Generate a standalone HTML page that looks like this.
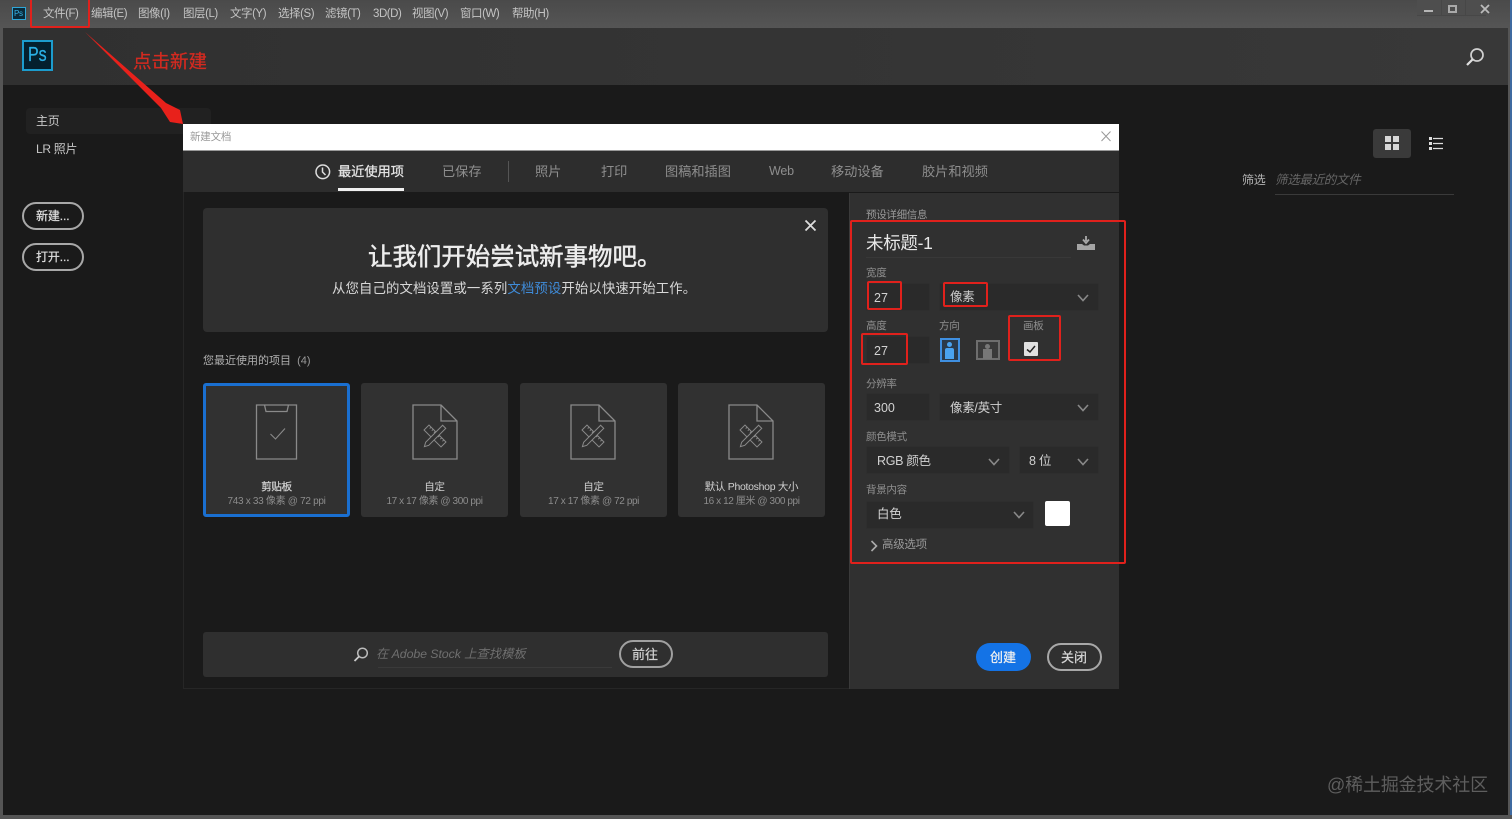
<!DOCTYPE html>
<html lang="zh-CN">
<head>
<meta charset="utf-8">
<title>Photoshop</title>
<style>
html,body{margin:0;padding:0;width:1512px;height:819px;overflow:hidden;background:#1a1a1a}
body{position:relative;font-family:"Liberation Sans","Noto Sans CJK SC",sans-serif;color:#ccc}
div,span.t{position:absolute;box-sizing:border-box}
.t{white-space:nowrap;line-height:1;letter-spacing:-.3px}
.m{font-size:11.5px;top:9px;color:#c4c4c4;letter-spacing:-.45px}
.tab{font-size:13.2px;top:165px;color:#8e8e8e;letter-spacing:0}
.lab{font-size:10.5px;color:#8f8f8f}
.val{font-size:12.5px;color:#d2d2d2}
.inp{background:#2a2a2a;border:1px solid #2e2e2e;border-radius:2px;height:28px}
.red{border:2px solid #e0211c;border-radius:2px}
.card{background:#313131;border-radius:3px;top:383px;width:147px;height:134px}
.ct{font-size:10.5px;top:482px;color:#d0d0d0;text-align:center;width:147px}
.cs{font-size:10px;top:497px;color:#8c8c8c;text-align:center;width:147px}
.b{-webkit-text-stroke:.25px currentColor}
svg{position:absolute;overflow:visible}
</style>
</head>
<body>
<div style="left:0;top:0;width:1512px;height:819px;filter:blur(.35px)">
<!-- title bar -->
<div style="left:0;top:0;width:1512px;height:28px;background:linear-gradient(#4a4a4a,#555)"></div>
<div style="left:0;top:28px;width:3px;height:791px;background:#555"></div>
<div style="left:1508px;top:28px;width:4px;height:791px;background:#555"></div>
<div style="left:1510px;top:0;width:2px;height:819px;background:#3f6aa0"></div>
<div style="left:0;top:815px;width:1512px;height:4px;background:#555"></div>
<div style="left:12px;top:7px;width:14px;height:13px;background:#0a2a3a;border:1px solid #2fa6d8"></div>
<span class="t" style="left:14px;top:10px;font-size:8px;color:#39b2e6">Ps</span>
<span class="t m" style="left:43px">文件(F)</span>
<span class="t m" style="left:91px">编辑(E)</span>
<span class="t m" style="left:138px">图像(I)</span>
<span class="t m" style="left:183px">图层(L)</span>
<span class="t m" style="left:230px">文字(Y)</span>
<span class="t m" style="left:278px">选择(S)</span>
<span class="t m" style="left:325px">滤镜(T)</span>
<span class="t m" style="left:373px">3D(D)</span>
<span class="t m" style="left:412px">视图(V)</span>
<span class="t m" style="left:460px">窗口(W)</span>
<span class="t m" style="left:512px">帮助(H)</span>
<div style="left:1417px;top:0;width:69px;height:16px;background:#4e4e4e;border-bottom:1px solid #474747"></div>
<div style="left:1441px;top:0;width:1px;height:16px;background:#474747"></div>
<div style="left:1465px;top:0;width:1px;height:16px;background:#474747"></div>
<div style="left:1424px;top:10px;width:9px;height:2px;background:#b5b5b5"></div>
<div style="left:1448px;top:5px;width:9px;height:8px;border:2px solid #aaa"></div>
<svg style="left:1480px;top:4px" width="10" height="10"><path d="M1 1L9 9M9 1L1 9" stroke="#bbb" stroke-width="1.8"/></svg>
<!-- header -->
<div style="left:3px;top:28px;width:1505px;height:57px;background:linear-gradient(90deg,#303030,#383838)"></div>
<div style="left:22px;top:40px;width:31px;height:31px;background:#04202e;border:2px solid #1c9ccd"></div>
<span class="t b" style="left:28px;top:45px;font-size:20px;color:#2bb0e6;letter-spacing:0;transform:scaleX(.8);transform-origin:left top">Ps</span>
<span class="t b" style="left:133px;top:53px;font-size:18.5px;color:#d42a20;letter-spacing:0">点击新建</span>
<svg style="left:1465px;top:47px" width="22" height="20" fill="none"><circle cx="12" cy="8" r="6" stroke="#d0d0d0" stroke-width="1.7"/><path d="M7.500 12.500L2 18" stroke="#e0e0e0" stroke-width="2.200"/></svg>
<!-- sidebar -->
<div style="left:26px;top:108px;width:185px;height:26px;background:#212121;border-radius:4px"></div>
<span class="t" style="left:36px;top:115px;font-size:12px;color:#c8c8c8">主页</span>
<span class="t" style="left:36px;top:143px;font-size:12px;color:#c8c8c8">LR 照片</span>
<div style="left:22px;top:202px;width:62px;height:28px;border:2px solid #a8a8a8;border-radius:14px"></div>
<span class="t b" style="left:36px;top:210px;font-size:12px;color:#ddd;letter-spacing:-.1px">新建...</span>
<div style="left:22px;top:243px;width:62px;height:28px;border:2px solid #a8a8a8;border-radius:14px"></div>
<span class="t b" style="left:36px;top:251px;font-size:12px;color:#ddd;letter-spacing:-.1px">打开...</span>
<!-- right tools -->
<div style="left:1373px;top:129px;width:38px;height:29px;background:#3a3a3a;border-radius:3px"></div>
<div style="left:1385px;top:136px;width:6px;height:6px;background:#d8d8d8"></div>
<div style="left:1393px;top:136px;width:6px;height:6px;background:#d8d8d8"></div>
<div style="left:1385px;top:144px;width:6px;height:6px;background:#d8d8d8"></div>
<div style="left:1393px;top:144px;width:6px;height:6px;background:#d8d8d8"></div>
<svg style="left:1429px;top:136px" width="15" height="15"><path d="M0 1h3v3H0zM0 6h3v3H0zM0 11h3v3H0z" fill="#ddd"/><path d="M4 2.500h10M4 7.500h10M4 12.500h10" stroke="#ddd" stroke-width="1.200"/></svg>
<span class="t" style="left:1242px;top:174px;font-size:12px;color:#b5b5b5">筛选</span>
<span class="t" style="left:1275px;top:174px;font-size:12.500px;color:#666;font-style:italic">筛选最近的文件</span>
<div style="left:1275px;top:194px;width:179px;height:1px;background:#3a3a3a"></div>
<span class="t" style="left:1327px;top:776px;font-size:18px;color:#5e5e5e;letter-spacing:-.15px">@稀土掘金技术社区</span>

<!-- dialog -->
<div style="left:183px;top:124px;width:936px;height:565px;background:#1a1a1a;border-left:1px solid #262626;border-bottom:1px solid #262626"></div>
<div style="left:183px;top:124px;width:936px;height:27px;background:#fff;border-bottom:1px solid #999"></div>
<span class="t" style="left:190px;top:132px;font-size:10.500px;color:#999;letter-spacing:-.2px">新建文档</span>
<svg style="left:1101px;top:131px" width="10" height="11"><path d="M.5 .5L9.500 10M9.500 .5L.5 10" stroke="#999" stroke-width="1"/></svg>
<div style="left:183px;top:151px;width:936px;height:41px;background:#2d2d2d"></div>
<svg style="left:315px;top:164px" width="16" height="16" fill="none"><circle cx="7.800" cy="7.800" r="6.800" stroke="#ddd" stroke-width="1.500"/><path d="M7.500 3.500V8L10.500 11" stroke="#ddd" stroke-width="1.500"/></svg>
<span class="t tab b" style="left:338px;color:#e6e6e6">最近使用项</span>
<div style="left:338px;top:188px;width:66px;height:3px;background:#f0f0f0"></div>
<span class="t tab" style="left:442px">已保存</span>
<div style="left:508px;top:161px;width:1px;height:21px;background:#555"></div>
<span class="t tab" style="left:535px">照片</span>
<span class="t tab" style="left:601px">打印</span>
<span class="t tab" style="left:665px">图稿和插图</span>
<span class="t tab" style="left:769px;font-size:12.500px;top:165px;letter-spacing:-.2px">Web</span>
<span class="t tab" style="left:831px">移动设备</span>
<span class="t tab" style="left:922px">胶片和视频</span>

<!-- banner -->
<div style="left:203px;top:208px;width:625px;height:124px;background:#2f2f2f;border-radius:4px"></div>
<svg style="left:805px;top:220px" width="11" height="11"><path d="M.5 .5L10.500 10.500M10.500 .5L.5 10.500" stroke="#ddd" stroke-width="1.800"/></svg>
<span class="t" style="left:368px;top:246px;font-size:24.500px;color:#ededed;letter-spacing:-.05px;-webkit-text-stroke:.5px #ededed">让我们开始尝试新事物吧。</span>
<span class="t" style="left:332px;top:282px;font-size:13.400px;color:#d8d8d8;letter-spacing:.1px">从您自己的文档设置或一系列<span style="color:#3f8bd8">文档预设</span>开始以快速开始工作。</span>
<span class="t" style="left:203px;top:356px;font-size:11px;color:#b0b0b0;letter-spacing:0">您最近使用的项目&nbsp;&nbsp;<span style="color:#999">(4)</span></span>

<!-- cards -->
<div class="card" style="left:203px;border:3px solid #1a6fd0"></div>
<div class="card" style="left:361px"></div>
<div class="card" style="left:520px"></div>
<div class="card" style="left:678px"></div>
<svg style="left:255px;top:404px" width="44" height="57" fill="none" stroke="#8a8a8a" stroke-width="1.300"><path d="M1.500 1H41.500V55H1.500Z"/><path d="M9.500 1L11 7.500H32L33.500 1"/><path d="M15.500 30L20.500 35L30 24.500" stroke-width="1.100"/></svg>
<svg width="0" height="0"><defs><g id="doc" fill="none" stroke="#8a8a8a" stroke-width="1.300"><path d="M1 1H29L45 17V55H1Z"/><path d="M29 1V17H45"/><g transform="translate(23 32) rotate(45)" stroke-width="1"><rect x="-12" y="-3.500" width="24" height="7"/><path d="M-9 -3.500v2M-6 -3.500v2M-3 -3.500v2M3 -3.500v2M6 -3.500v2M9 -3.500v2"/></g><g transform="translate(23 32) rotate(-45)" stroke-width="1"><path d="M-15 0L-11 -2.200H13V2.200H-11Z" fill="#313131"/></g></g></defs></svg>
<svg style="left:412px;top:404px" width="46" height="56"><use href="#doc"/></svg>
<svg style="left:570px;top:404px" width="46" height="56"><use href="#doc"/></svg>
<svg style="left:728px;top:404px" width="46" height="56"><use href="#doc"/></svg>
<span class="t ct b" style="left:203px">剪贴板</span>
<span class="t cs" style="left:203px">743 x 33 像素 @ 72 ppi</span>
<span class="t ct" style="left:361px">自定</span>
<span class="t cs" style="left:361px;letter-spacing:-.4px">17 x 17 像素 @ 300 ppi</span>
<span class="t ct" style="left:520px">自定</span>
<span class="t cs" style="left:520px;letter-spacing:-.4px">17 x 17 像素 @ 72 ppi</span>
<span class="t ct" style="left:678px">默认 Photoshop 大小</span>
<span class="t cs" style="left:678px;letter-spacing:-.4px">16 x 12 厘米 @ 300 ppi</span>

<!-- stock bar -->
<div style="left:203px;top:632px;width:625px;height:45px;background:#2f2f2f;border-radius:3px"></div>
<svg style="left:353px;top:647px" width="16" height="15" fill="none"><circle cx="9.500" cy="6" r="4.800" stroke="#bbb" stroke-width="1.500"/><path d="M6 9.500L1.500 14" stroke="#ccc" stroke-width="1.800"/></svg>
<span class="t" style="left:376px;top:648px;font-size:12.400px;color:#6f6f6f;font-style:italic;letter-spacing:-.1px">在 Adobe Stock 上查找模板</span>
<div style="left:378px;top:667px;width:234px;height:1px;background:#3a3a3a"></div>
<div style="left:619px;top:640px;width:54px;height:28px;border:2px solid #a0a0a0;border-radius:14px"></div>
<span class="t b" style="left:632px;top:648px;font-size:13px;color:#d0d0d0;letter-spacing:0">前往</span>

<!-- right panel -->
<div style="left:849px;top:193px;width:270px;height:496px;background:#303030;border-left:1px solid #3a3a3a"></div>
<span class="t lab" style="left:866px;top:210px;color:#9a9a9a">预设详细信息</span>
<span class="t" style="left:866px;top:235px;font-size:17.500px;color:#e8e8e8;letter-spacing:-.3px">未标题-1</span>
<div style="left:866px;top:257px;width:205px;height:1px;background:#383838"></div>
<svg style="left:1076px;top:236px" width="20" height="14"><path d="M10 0V5M7 3.500L10 7L13 3.500" fill="none" stroke="#aaa" stroke-width="1.800"/><path d="M1 8H6L8 9.500H12L14 8H19V14H1Z" fill="#a5a5a5"/></svg>
<span class="t lab" style="left:866px;top:268px">宽度</span>
<div class="inp" style="left:866px;top:283px;width:64px"></div>
<div class="inp" style="left:939px;top:283px;width:160px"></div>
<span class="t val" style="left:874px;top:292px;letter-spacing:0">27</span>
<span class="t val" style="left:950px;top:291px;color:#ccc">像素</span>
<span class="t lab" style="left:866px;top:321px">高度</span>
<div class="inp" style="left:866px;top:336px;width:64px"></div>
<span class="t val" style="left:874px;top:345px;letter-spacing:0">27</span>
<span class="t lab" style="left:939px;top:321px">方向</span>
<span class="t lab" style="left:1023px;top:321px">画板</span>
<div style="left:940px;top:338px;width:20px;height:24px;border:2px solid #3f8fe0;background:#2b3a4a"></div>
<div style="left:947px;top:342px;width:5px;height:5px;border-radius:3px;background:#4aa3f0"></div>
<div style="left:945px;top:348px;width:9px;height:11px;background:#4aa3f0;border-radius:2px 2px 0 0"></div>
<div style="left:976px;top:340px;width:24px;height:20px;border:2px solid #6e6e6e;background:#3a3a3a"></div>
<div style="left:985px;top:344px;width:5px;height:5px;border-radius:3px;background:#777"></div>
<div style="left:983px;top:349px;width:9px;height:10px;background:#777"></div>
<div style="left:1024px;top:342px;width:14px;height:14px;background:#e0e0e0;border-radius:1px"></div>
<svg style="left:1024px;top:342px" width="14" height="14" fill="none"><path d="M3 7.500L6 10L11 4" stroke="#222" stroke-width="1.500"/></svg>
<span class="t lab" style="left:866px;top:379px">分辨率</span>
<div class="inp" style="left:866px;top:393px;width:64px"></div>
<div class="inp" style="left:939px;top:393px;width:160px"></div>
<span class="t val" style="left:874px;top:402px;letter-spacing:0">300</span>
<span class="t val" style="left:950px;top:402px">像素/英寸</span>
<span class="t lab" style="left:866px;top:432px">颜色模式</span>
<div class="inp" style="left:866px;top:446px;width:144px"></div>
<div class="inp" style="left:1019px;top:446px;width:80px"></div>
<span class="t val" style="left:877px;top:455px">RGB 颜色</span>
<span class="t val" style="left:1029px;top:455px">8 位</span>
<span class="t lab" style="left:866px;top:485px">背景内容</span>
<div class="inp" style="left:866px;top:501px;width:168px"></div>
<span class="t val" style="left:877px;top:508px">白色</span>
<div style="left:1045px;top:501px;width:25px;height:25px;background:#fff;border-radius:2px"></div>
<svg style="left:1077px;top:294px" width="12" height="8" fill="none"><path d="M1 1L6 6.500L11 1" stroke="#888" stroke-width="1.600"/></svg>
<svg style="left:1077px;top:404px" width="12" height="8" fill="none"><path d="M1 1L6 6.500L11 1" stroke="#888" stroke-width="1.600"/></svg>
<svg style="left:988px;top:458px" width="12" height="8" fill="none"><path d="M1 1L6 6.500L11 1" stroke="#888" stroke-width="1.600"/></svg>
<svg style="left:1077px;top:458px" width="12" height="8" fill="none"><path d="M1 1L6 6.500L11 1" stroke="#888" stroke-width="1.600"/></svg>
<svg style="left:1013px;top:511px" width="12" height="8" fill="none"><path d="M1 1L6 6.500L11 1" stroke="#888" stroke-width="1.600"/></svg>
<svg style="left:870px;top:540px" width="8" height="12" fill="none"><path d="M1.500 1L6.500 6L1.500 11" stroke="#aaa" stroke-width="1.600"/></svg>
<span class="t lab" style="left:882px;top:540px;font-size:11.500px;color:#999">高级选项</span>
<div style="left:976px;top:643px;width:55px;height:28px;border-radius:14px;background:#1473e6"></div>
<span class="t b" style="left:990px;top:651px;font-size:13px;color:#f0f0f0;letter-spacing:0">创建</span>
<div style="left:1047px;top:643px;width:55px;height:28px;border:2px solid #a8a8a8;border-radius:14px"></div>
<span class="t b" style="left:1061px;top:651px;font-size:13px;color:#d5d5d5;letter-spacing:0">关闭</span>

<!-- red annotations -->
<div class="red" style="left:30px;top:-2px;width:60px;height:30px"></div>
<div class="red" style="left:850px;top:220px;width:276px;height:344px"></div>
<div class="red" style="left:867px;top:281px;width:35px;height:29px"></div>
<div class="red" style="left:943px;top:282px;width:45px;height:25px"></div>
<div class="red" style="left:861px;top:333px;width:47px;height:32px"></div>
<div class="red" style="left:1008px;top:315px;width:53px;height:46px"></div>
<svg style="left:80px;top:28px" width="108" height="100"><path d="M5 4L86 75L100 82L103 96L90 94L81 80Z" fill="#e8211b"/></svg>
</div>
</body>
</html>
